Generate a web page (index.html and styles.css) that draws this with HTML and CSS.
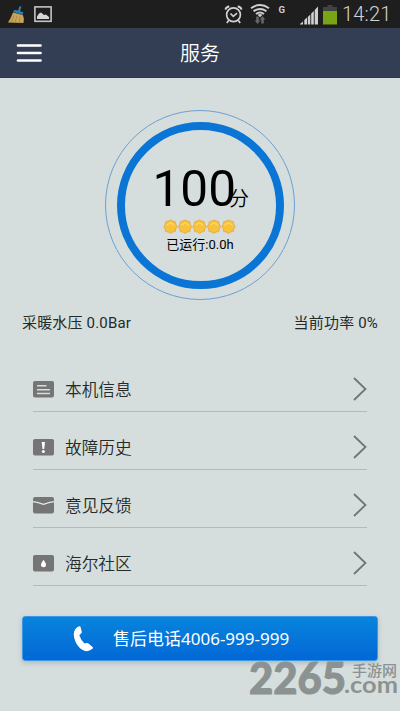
FILE: index.html
```html
<!DOCTYPE html>
<html lang="zh-CN">
<head>
<meta charset="utf-8">
<title>服务</title>
<link rel="stylesheet" href="styles.css">
</head>
<body>
<div class="app">
  <div class="status">
    <svg class="status-left" width="60" height="28" viewBox="0 0 60 28">
      <path d="M19.500 6 L21.500 6.800 L20 11 L23.500 12.500 L22.500 15 L13 12 L14.500 9.800 L18 10.500Z" fill="#2f7da6"/>
      <path d="M13 12.500 L23 15.300 Q24.500 19 23.500 23 L8 22.500 Q10.500 19 13 12.500Z" fill="#c9a55c"/>
      <path d="M14 15 L11.500 22 M17 16 L15 22.500 M20 16.500 L19.500 22.500" stroke="#a98339" stroke-width=".8" fill="none"/>
      <rect x="34.900" y="6.900" width="16.200" height="14.400" fill="none" stroke="#c4c4c4" stroke-width="1.600"/>
      <path d="M37 19V16.500L39 13.500L41 12.500L44 15L46 14.500L49 17V19Z" fill="#d6d6d6"/>
    </svg>
    <svg class="status-right" width="142" height="28" viewBox="0 0 142 28">
      <g fill="none" stroke="#d0d0d0" stroke-width="1.700">
        <circle cx="33.500" cy="14.800" r="6.900"/>
        <path d="M30.500 13.500L33.300 16.300L37 13.200M28.800 20.300L26.800 23M38.200 20.300L40.200 23"/>
        <path d="M25.500 9.600Q26 6.600 29.300 6.400M37.700 6.400Q41 6.600 41.500 9.600" stroke-width="2"/>
        <path d="M51 8.200Q60 1.900 69 8.200M53.500 11.300Q60 6.700 66.500 11.300M56 14Q60 11 64 14" stroke-width="1.900"/>
      </g>
      <path d="M57.500 14.800Q60 13.200 62.500 14.800L60 17.300Z" fill="#d0d0d0"/>
      <path d="M56.200 16.500H58.800V20.500H60.300L57.500 24L54.700 20.500H56.200ZM61.200 23.500V19.500H59.700L62.500 16L65.300 19.500H63.800V23.500Z" fill="#666"/>
      <text class="net" x="78.500" y="13.300">G</text>
      <path d="M100 24.500V24L103 21.500V24.500ZM104.300 24.500V20L107 17.500V24.500ZM107.800 24.500V17L110.300 14.500V24.500ZM111.200 24.500V13.500L113.800 11V24.500ZM114.700 24.500V10L118 6.500V24.500Z" fill="#d0d0d0"/>
      <path d="M127.500 5H132.500V7H137V12H123V7H127.500Z" fill="#424242"/>
      <path d="M123 11H137V24.500H123Z" fill="#78a514"/>
    </svg>
    <span class="clock">14:21</span>
  </div>
  <header class="bar">
    <svg class="burger" width="26" height="18" viewBox="0 0 26 18">
      <path d="M2 1.500H24.500M2 9H24.500M2 16.500H24.500" stroke="#fff" stroke-width="2.700" stroke-linecap="round"/>
    </svg>
    <h1>服务</h1>
  </header>
  <main>
    <section class="gauge">
      <div class="ring">
        <div class="score"><b>100</b><span>分</span></div>
        <svg class="badges" width="74" height="16" viewBox="0 0 74 16">
          <defs>
            <g id="badge">
              <path d="M7.500 1L9.800 2.100L12.200 2.600L12.700 5.200L14.200 7.600L12.800 9.900L12.300 12.500L9.700 13L7.500 14.400L5.300 13L2.700 12.500L2.200 9.900L.8 7.600L2.300 5.200L2.800 2.600L5.200 2.100Z" fill="#f8c23a" stroke="#e7a846" stroke-width=".9" stroke-linejoin="round"/>
              <path d="M3.500 6.500Q4.500 4.800 6 5L7.500 3.800L9 5Q10.500 4.800 11.500 6.500" fill="none" stroke="#fde48a" stroke-width=".9"/>
            </g>
          </defs>
          <use href="#badge" x="0"/><use href="#badge" x="14.500"/><use href="#badge" x="29"/><use href="#badge" x="43.500"/><use href="#badge" x="58"/>
        </svg>
        <p class="hours">已运行:0.0h</p>
      </div>
    </section>
    <section class="stats"><span>采暖水压 0.0Bar</span><span>当前功率 0%</span></section>
    <nav class="menu">
      <a class="item">
        <svg class="icon" width="21" height="17" viewBox="0 0 21 17"><rect width="21" height="16.500" rx="2" fill="#757575"/><path d="M4 4.800H13.500M4 8.700H17M4 12.500H17" stroke="#d5dedc" stroke-width="1.500"/></svg>
        <span>本机信息</span>
        <svg class="chev" width="14" height="24" viewBox="0 0 14 24"><path d="M1 1L12.500 12L1 23" /></svg>
      </a>
      <a class="item">
        <svg class="icon" width="21" height="17" viewBox="0 0 21 17"><rect width="21" height="16.500" rx="2" fill="#757575"/><path d="M8.700 3H12L11.200 10H9.500Z" fill="#fff"/><circle cx="10.400" cy="12.500" r="1.500" fill="#fff"/></svg>
        <span>故障历史</span>
        <svg class="chev" width="14" height="24" viewBox="0 0 14 24"><path d="M1 1L12.500 12L1 23" /></svg>
      </a>
      <a class="item">
        <svg class="icon" width="21" height="17" viewBox="0 0 21 17"><rect width="21" height="16.500" rx="2" fill="#757575"/><path d="M0 4.700Q5 5.400 10.500 7.300Q16 5.400 21 4.700" stroke="#e2e8e7" stroke-width="1.300" fill="none"/></svg>
        <span>意见反馈</span>
        <svg class="chev" width="14" height="24" viewBox="0 0 14 24"><path d="M1 1L12.500 12L1 23" /></svg>
      </a>
      <a class="item">
        <svg class="icon" width="21" height="17" viewBox="0 0 21 17"><rect width="21" height="16.500" rx="2" fill="#757575"/><path d="M10.500 4.800Q13 8.200 13 9.700A2.500 2.500 0 0 1 8 9.700Q8 8.200 10.500 4.800Z" fill="#fff"/></svg>
        <span>海尔社区</span>
        <svg class="chev" width="14" height="24" viewBox="0 0 14 24"><path d="M1 1L12.500 12L1 23" /></svg>
      </a>
    </nav>
    <a class="call">
      <svg width="21" height="26" viewBox="0 0 21 26"><path d="M7.500 .8L8.800 5.900Q9 6.900 8 7.500L6.300 9.300Q8 14.500 11.600 17.600L13.500 17Q14.600 16.700 15.500 17.500L19.800 21.200Q20.300 22 19.500 22.800Q16 25.700 12 25Q6 23 2.800 16.500Q-.2 10 1.200 5.500Q2.500 1.500 6.300 .3Q7.200 0 7.500 .8Z" fill="#fff"/></svg>
      <span>售后电话4006-999-999</span>
    </a>
  </main>
  <svg class="mark" width="156" height="51" viewBox="0 0 156 51">
    <text class="mark-num" x="5" y="43.500" textLength="97" lengthAdjust="spacingAndGlyphs">2265</text>
    <text class="mark-com" x="100" y="43" textLength="54" lengthAdjust="spacingAndGlyphs">.com</text>
    <text class="mark-cn" x="108" y="26" textLength="45" lengthAdjust="spacingAndGlyphs">手游网</text>
  </svg>
</div>
</body>
</html>
```
FILE: styles.css
```css
* { box-sizing: border-box; }
body, h1, p { margin: 0; }
body {
  background: #d5dedc;
  color: #252a2a;
  font-family: Roboto, "Noto Sans CJK SC", sans-serif;
}
.app {
  position: relative;
  width: 400px;
  height: 711px;
  overflow: hidden;
}
.status {
  display: flex;
  height: 28px;
  background: #1e1e1e;
}
.status-right { margin-left: 140px; flex: none; }
.status-left { flex: none; }
.clock {
  color: #d2d2d2;
  font-size: 20px;
  font-weight: 300;
  line-height: 29px;
  letter-spacing: .2px;
  white-space: nowrap;
}
.net { fill: #d0d0d0; font-size: 9.500px; font-weight: 700; }
.bar {
  display: grid;
  grid-template-columns: 1fr auto 1fr;
  align-items: center;
  height: 50px;
  padding: 0 16px;
  background: #333d53;
  border-bottom: 1px solid #2c374b;
}
.bar h1 {
  padding-top: 2px;
  color: #fff;
  font-size: 20px;
  font-weight: 350;
  line-height: 48px;
}
.gauge {
  display: flex;
  align-items: center;
  justify-content: center;
  width: 190px;
  height: 190px;
  margin: 32px auto 0 105px;
  border: 1px solid #6d9fd2;
  border-radius: 50%;
}
.ring {
  display: flex;
  flex-direction: column;
  align-items: center;
  width: 167px;
  height: 167px;
  padding-top: 29px;
  border: 8px solid #0b75d5;
  border-radius: 50%;
  color: #000;
}
.score {
  display: flex;
  align-items: baseline;
  width: 95px;
  height: 60px;
  line-height: 60px;
}
.score b { font-size: 49.500px; font-weight: 400; }
.score span { margin-left: -7px; font-size: 20px; font-weight: 350; }
.hours {
  font-size: 13px;
  line-height: 19px;
}
.stats {
  display: flex;
  justify-content: space-between;
  margin-top: 11px;
  padding: 0 22px;
  font-size: 15px;
  letter-spacing: .18px;
  line-height: 24px;
}
.menu { margin: 19px 33px 0; }
.item {
  display: flex;
  align-items: center;
  height: 58px;
  padding-top: 13px;
  border-bottom: 1px solid #b3bbb9;
  font-size: 16.700px;
  font-weight: 350;
}
.item span { margin-left: 11px; padding-top: 3px; line-height: 24px; }
.chev {
  margin-left: auto;
  fill: none;
  stroke: #6f7776;
  stroke-width: 1.800;
}
.call {
  display: flex;
  align-items: center;
  height: 45px;
  margin: 30px 22px 0;
  padding-left: 50px;
  border: 1px solid #3c98e4;
  border-radius: 3px;
  background: linear-gradient(#0884dc, #0268d6);
  box-shadow: 0 2px 5px rgba(60, 80, 90, .25);
  color: #fff;
  font-family: "Noto Sans", "Noto Sans CJK SC", sans-serif;
  font-size: 17px;
  line-height: 43px;
}
.call span { margin-left: 19px; }
.mark {
  position: absolute;
  left: 244px;
  top: 650px;
  fill: #8c9292;
}
.mark-num {
  font: 900 43px Lato, sans-serif;
  stroke: #8c9292;
  stroke-width: 1;
  stroke-linejoin: round;
}
.mark-com { font: 700 23px Lato, sans-serif; }
.mark-cn { font: 500 15px "Noto Sans CJK SC", sans-serif; }
```
